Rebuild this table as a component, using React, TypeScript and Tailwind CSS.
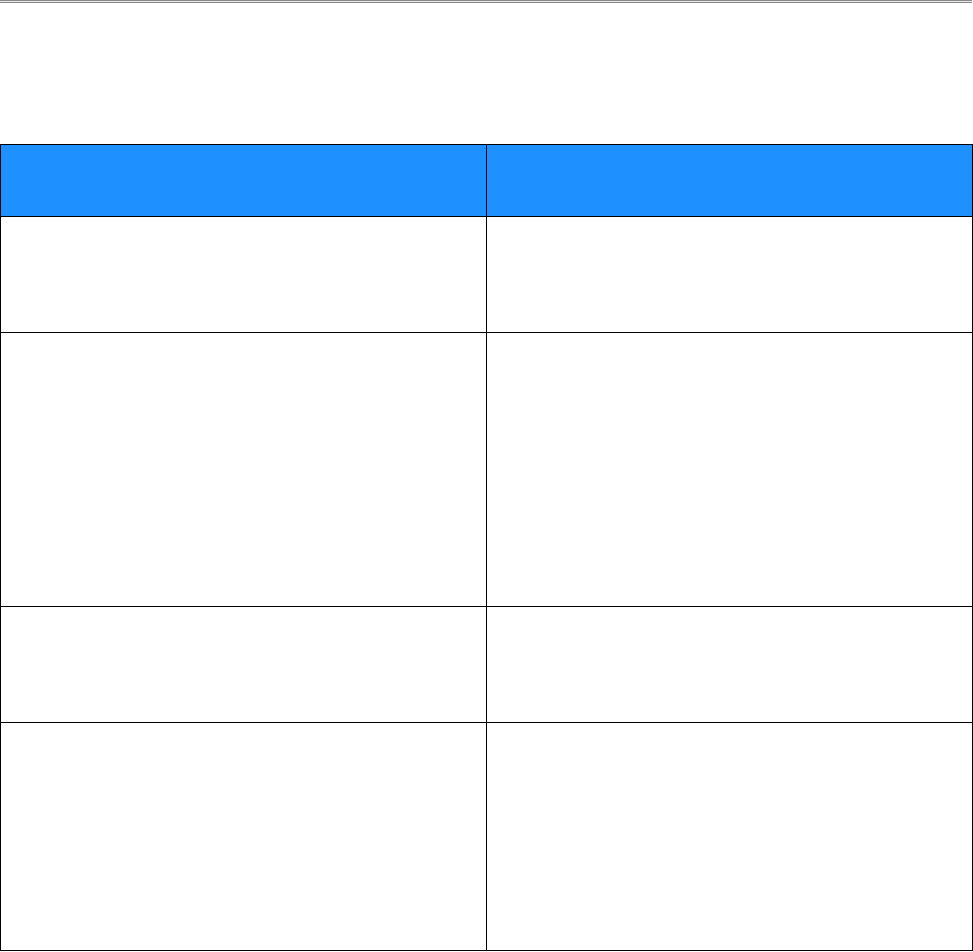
const ROWS = [116, 274, 116, 228];

export default function App() {
  return (
    <div className="w-[973px] h-[952px] bg-white font-['Liberation_Sans',Arial,sans-serif]">
      {/* rule at the top */}
      <div className="w-[972px] h-[3px] border-y border-[#8a8a8a] bg-[#e6e6e6]" />

      <div className="h-[141px]" />

      {/* table */}
      <div className="grid grid-cols-[486px_486px] border-t border-l border-black">
        <div className="h-[72px] bg-[#1e90ff] border-r border-b border-black" />
        <div className="h-[72px] bg-[#1e90ff] border-r border-b border-black" />
        {ROWS.map((h, i) => (
          <div key={i} className="contents">
            <div className="border-r border-b border-black" style={{ height: h }} />
            <div className="border-r border-b border-black" style={{ height: h }} />
          </div>
        ))}
      </div>
    </div>
  );
}
